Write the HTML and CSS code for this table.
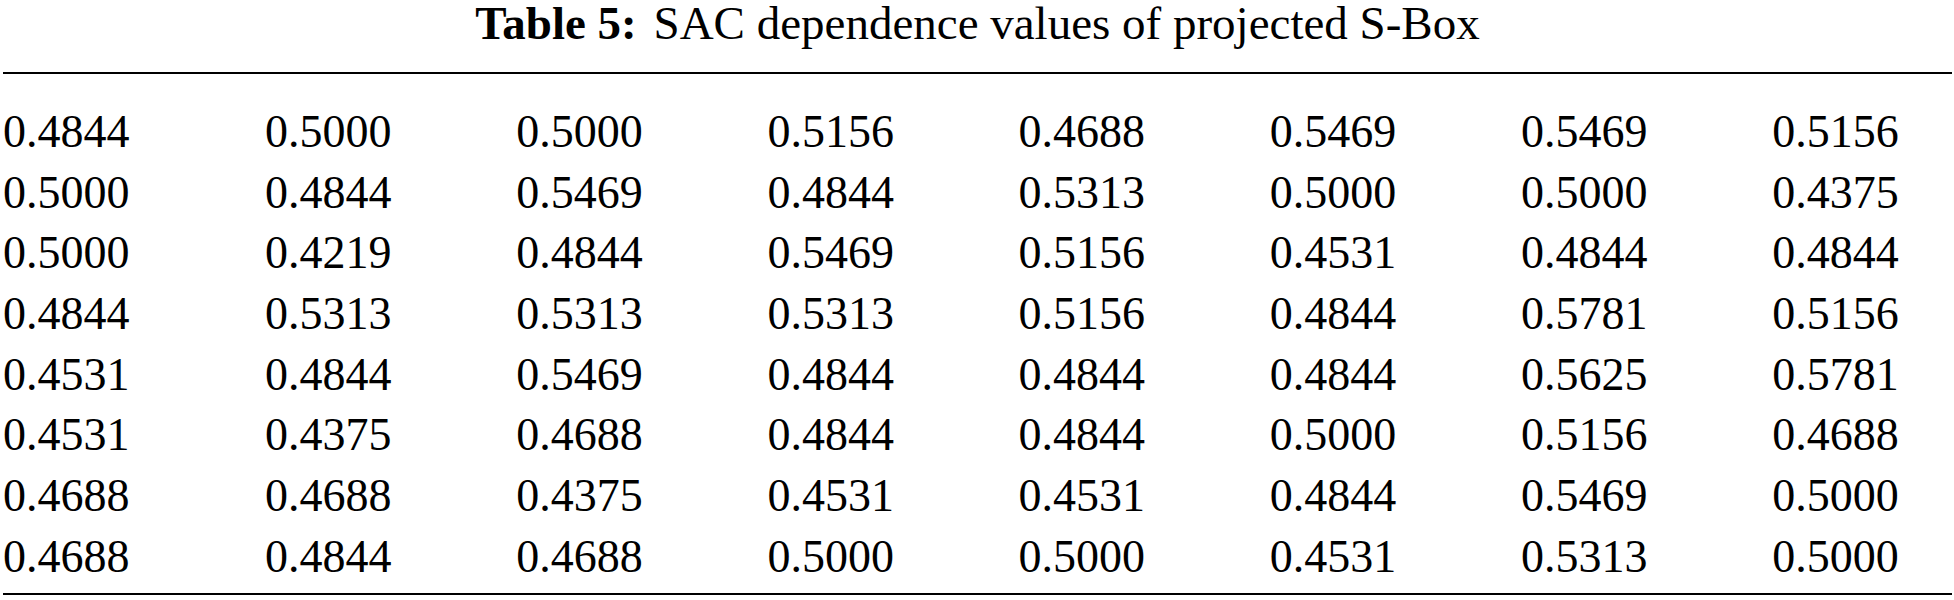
FILE: index.html
```html
<!DOCTYPE html>
<html>
<head>
<meta charset="utf-8">
<link rel="stylesheet" href="styles.css">
</head>
<body>
<div class="wrap">
  <div class="caption"><span class="label">Table 5:</span> SAC dependence values of projected S-Box</div>
  <div class="rule"></div>
  <div class="grid">
    <div>0.4844</div><div>0.5000</div><div>0.5000</div><div>0.5156</div><div>0.4688</div><div>0.5469</div><div>0.5469</div><div>0.5156</div>
    <div>0.5000</div><div>0.4844</div><div>0.5469</div><div>0.4844</div><div>0.5313</div><div>0.5000</div><div>0.5000</div><div>0.4375</div>
    <div>0.5000</div><div>0.4219</div><div>0.4844</div><div>0.5469</div><div>0.5156</div><div>0.4531</div><div>0.4844</div><div>0.4844</div>
    <div>0.4844</div><div>0.5313</div><div>0.5313</div><div>0.5313</div><div>0.5156</div><div>0.4844</div><div>0.5781</div><div>0.5156</div>
    <div>0.4531</div><div>0.4844</div><div>0.5469</div><div>0.4844</div><div>0.4844</div><div>0.4844</div><div>0.5625</div><div>0.5781</div>
    <div>0.4531</div><div>0.4375</div><div>0.4688</div><div>0.4844</div><div>0.4844</div><div>0.5000</div><div>0.5156</div><div>0.4688</div>
    <div>0.4688</div><div>0.4688</div><div>0.4375</div><div>0.4531</div><div>0.4531</div><div>0.4844</div><div>0.5469</div><div>0.5000</div>
    <div>0.4688</div><div>0.4844</div><div>0.4688</div><div>0.5000</div><div>0.5000</div><div>0.4531</div><div>0.5313</div><div>0.5000</div>
  </div>
  <div class="rule bottom"></div>
</div>
</body>
</html>
```
FILE: styles.css
```css
html, body {
  margin: 0;
  padding: 0;
  background: #ffffff;
}
body {
  font-family: "Liberation Serif", "Times New Roman", serif;
  color: #000000;
}
.wrap {
  width: 1949px;
  margin-left: 3px;
}
.caption {
  font-size: 47px;
  line-height: 46px;
  height: 46px;
  text-align: center;
  white-space: nowrap;
}
.label {
  font-weight: bold;
  margin-right: 5px;
}
.rule {
  height: 2px;
  background: #000000;
  margin-top: 26px;
}
.rule.bottom {
  margin-top: 5.4px;
}
.grid {
  display: grid;
  grid-template-columns: 262px repeat(6, 251.2px) auto;
  grid-auto-rows: 60.7px;
  padding-top: 28px;
  font-size: 46px;
  line-height: 60.7px;
  white-space: nowrap;
}
```
